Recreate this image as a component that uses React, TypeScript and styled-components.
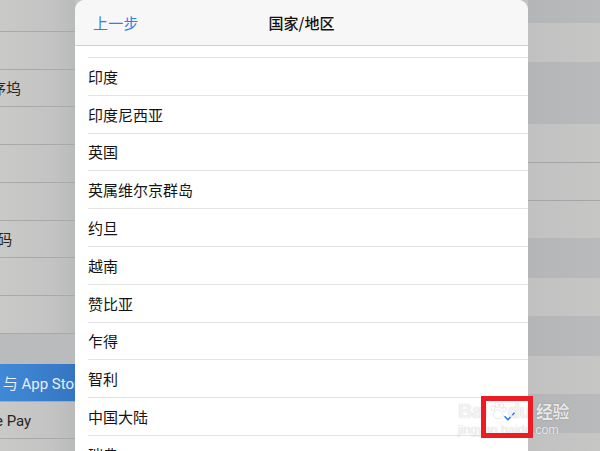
import styled, { createGlobalStyle } from "styled-components";

const GlobalStyle = createGlobalStyle`
  html, body {
    margin: 0;
    padding: 0;
    background: #c4c4c3;
  }
  body {
    font-family: "Noto Sans CJK SC", "Noto Sans", sans-serif;
  }
`;

const leftItems = [
  "控制中心",
  "显示与亮度",
  "主屏幕与程序坞",
  "辅助功能",
  "墙纸",
  "Siri 与搜索",
  "触控 ID 与密码",
  "电池",
  "隐私",
];

const countries = [
  "印度",
  "印度尼西亚",
  "英国",
  "英属维尔京群岛",
  "约旦",
  "越南",
  "赞比亚",
  "乍得",
  "智利",
  "中国大陆",
  "瑞典",
];

// 右侧被遮住的详情页色带
const bands: { h: number; dark?: boolean; line?: boolean }[] = [
  { h: 23, dark: true },
  { h: 39 },
  { h: 62, dark: true },
  { h: 38 },
  { h: 38, line: true },
  { h: 38, line: true },
  { h: 40, dark: true },
  { h: 38 },
  { h: 40, dark: true },
  { h: 38 },
  { h: 39, dark: true },
  { h: 40 },
];

const App = () => {
  return (
    <>
      <GlobalStyle />
      <Screen>
        <LeftPane>
          <LeftList>
            {leftItems.map((label) => (
              <LeftRow key={label}>
                <LeftLabel>{label}</LeftLabel>
              </LeftRow>
            ))}
            <SectionGap />
            <LeftRow $active>
              <LeftLabel $active>iTunes Store 与 App Store</LeftLabel>
            </LeftRow>
            <LeftRow>
              <LeftLabel>钱包与 Apple Pay</LeftLabel>
            </LeftRow>
            <LeftRow>
              <LeftLabel>密码与帐户</LeftLabel>
            </LeftRow>
          </LeftList>
        </LeftPane>

        <Sheet>
          <SheetHeader>
            <BackButton>上一步</BackButton>
            <SheetTitle>国家/地区</SheetTitle>
            <span />
          </SheetHeader>
          <ListTop />
          <CountryList>
            {countries.map((name) => (
              <CountryRow key={name}>
                <CountryName>{name}</CountryName>
                {name === "中国大陆" && (
                  <svg width="11" height="9" viewBox="0 0 11 9">
                    <path
                      d="M1 4.8 L3.9 7.7 L10 1.2"
                      fill="none"
                      stroke="#1a7cf5"
                      strokeWidth="1.6"
                      strokeLinecap="round"
                      strokeLinejoin="round"
                    />
                  </svg>
                )}
              </CountryRow>
            ))}
          </CountryList>
        </Sheet>

        <RightPane>
          {bands.map((b, i) => (
            <Band key={i} $h={b.h} $dark={b.dark} $line={b.line} />
          ))}
        </RightPane>

        <Watermark>
          <MarkTop>
            <span>Bai</span>
            <svg width="18" height="18" viewBox="0 0 18 18">
              <g fill="rgba(255,255,255,0.8)" stroke="rgba(150,150,150,0.35)" strokeWidth="0.6">
                <ellipse cx="4" cy="6" rx="2" ry="2.6" />
                <ellipse cx="8" cy="3" rx="2" ry="2.6" />
                <ellipse cx="12.5" cy="3.5" rx="2" ry="2.6" />
                <ellipse cx="15.5" cy="7.5" rx="1.8" ry="2.3" />
                <path d="M9 8 C5 8 3 14 6 16 C8 17 11 17 13 16 C16 14 13 8 9 8 Z" />
              </g>
            </svg>
            <span>du</span>
            <MarkCn>经验</MarkCn>
          </MarkTop>
          <MarkUrl>jingyan.baidu.com</MarkUrl>
        </Watermark>

        <RedFrame />
      </Screen>
    </>
  );
};

const Screen = styled.div`
  position: relative;
  width: 600px;
  height: 451px;
  overflow: hidden;
  display: grid;
  grid-template-columns: 75px 453px 72px;
`;

const LeftPane = styled.div`
  overflow: hidden;
  background: linear-gradient(90deg, #c9c9c8 0%, #c2c3c2 70%, #b9babb 100%);
`;

const LeftList = styled.div`
  display: flex;
  flex-direction: column;
  margin-top: -6px;
`;

const LeftRow = styled.div<{ $active?: boolean }>`
  box-sizing: border-box;
  height: 37.75px;
  flex-shrink: 0;
  display: flex;
  align-items: center;
  border-bottom: 1px solid #a9a9a9;
  background: ${(p) =>
    p.$active ? "linear-gradient(90deg, #4089d6 0%, #3a7ecb 60%, #3475c0 100%)" : "transparent"};
`;

const LeftLabel = styled.span<{ $active?: boolean }>`
  margin-left: -84px;
  white-space: nowrap;
  font-family: Roboto, "Noto Sans CJK SC", sans-serif;
  font-size: 15px;
  color: ${(p) => (p.$active ? "#e8eef7" : "#262626")};
`;

const SectionGap = styled.div`
  height: 30px;
  flex-shrink: 0;
  background: #babbbc;
`;

const Sheet = styled.div`
  display: flex;
  flex-direction: column;
  background: #ffffff;
  border-radius: 10px 10px 0 0;
  overflow: hidden;
`;

const SheetHeader = styled.div`
  height: 45px;
  flex-shrink: 0;
  display: grid;
  grid-template-columns: 1fr auto 1fr;
  align-items: center;
  padding: 0 18px;
  background: #f7f7f7;
  border-bottom: 1px solid #d2d2d2;
`;

const BackButton = styled.span`
  font-size: 15px;
  color: #2b7ef3;
  letter-spacing: 0.3px;
`;

const SheetTitle = styled.span`
  font-size: 15px;
  font-weight: 500;
  color: #111111;
`;

const ListTop = styled.div`
  height: 11px;
  flex-shrink: 0;
`;

const CountryList = styled.div`
  display: flex;
  flex-direction: column;
  padding-left: 13px;
`;

const CountryRow = styled.div`
  box-sizing: border-box;
  height: 37.8px;
  flex-shrink: 0;
  display: flex;
  align-items: center;
  justify-content: space-between;
  padding-right: 13px;
  border-top: 1px solid #e2e2e2;
`;

const CountryName = styled.span`
  font-size: 15px;
  color: #141414;
`;

const RightPane = styled.div`
  display: flex;
  flex-direction: column;
`;

const Band = styled.div<{ $h: number; $dark?: boolean; $line?: boolean }>`
  box-sizing: border-box;
  height: ${(p) => p.$h}px;
  flex-shrink: 0;
  background: ${(p) =>
    p.$dark
      ? "linear-gradient(90deg, #b3b5b7 0%, #b8babb 100%)"
      : "linear-gradient(90deg, #c0c1c0 0%, #c6c6c5 100%)"};
  border-top: ${(p) => (p.$line ? "1px solid #a4a5a6" : "none")};
`;

const Watermark = styled.div`
  position: absolute;
  left: 458px;
  top: 400px;
  display: flex;
  flex-direction: column;
  align-items: flex-start;
  pointer-events: none;
  color: rgba(255, 255, 255, 0.8);
  text-shadow: 0 0 1px rgba(120, 120, 120, 0.45);
  font-family: "Liberation Sans", Arial, sans-serif;
`;

const MarkTop = styled.div`
  display: flex;
  align-items: center;
  gap: 1px;
  font-size: 20px;
  font-weight: 700;
  line-height: 22px;
  letter-spacing: -0.5px;
`;

const MarkCn = styled.span`
  margin-left: 4px;
  font-family: "Noto Sans CJK SC", sans-serif;
  font-size: 17px;
  font-weight: 700;
  color: rgba(255, 255, 255, 0.85);
  text-shadow: 0 0 1px rgba(70, 70, 70, 0.7);
`;

const MarkUrl = styled.span`
  margin-top: 1px;
  font-size: 12.5px;
  line-height: 14px;
  color: rgba(255, 255, 255, 0.75);
`;

const RedFrame = styled.div`
  position: absolute;
  left: 481px;
  top: 396px;
  width: 52px;
  height: 42px;
  box-sizing: border-box;
  border: 5px solid #ec1c24;
  pointer-events: none;
`;

export default App;
